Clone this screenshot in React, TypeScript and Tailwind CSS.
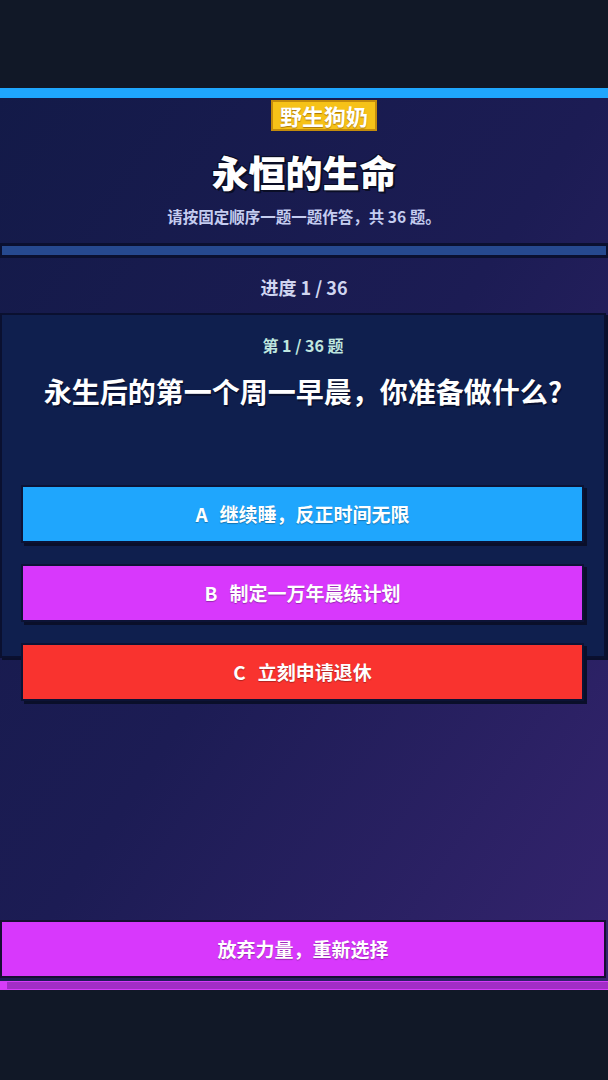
const options = [
  { key: "A", text: "继续睡，反正时间无限", color: "bg-[#1fa6fd]" },
  { key: "B", text: "制定一万年晨练计划", color: "bg-[#d838fc]" },
  { key: "C", text: "立刻申请退休", color: "bg-[#f9332f]" },
];

const font = "font-['Noto_Sans_CJK_SC','Noto_Sans',sans-serif]";

export default function App() {
  return (
    <div className={`flex min-h-[1080px] flex-col bg-[#111827] ${font}`}>
      <div className="h-[88px]" />
      <main className="flex h-[902px] flex-col bg-linear-to-br from-[#131a48] via-[#1c1c54] to-[#35246f]">
        <div className="h-[10px] bg-[#1fa6fd]" />

        <div className="ml-[40px] mt-[2px] self-center border-2 border-[#c48c0c] bg-[#f6c218] px-[7px] text-[22px] font-bold leading-[27px] text-white [text-shadow:0_1px_1px_rgba(120,70,0,0.6)]">
          野生狗奶
        </div>

        <h1 className="mt-[19px] text-center text-[37px] font-black leading-[44px] text-white [text-shadow:2px_2px_0_#0a0e26,-1px_-1px_0_#0a0e26,1px_-1px_0_#0a0e26,-1px_1px_0_#0a0e26]">
          永恒的生命
        </h1>
        <p className="mt-[12px] text-center text-[15.5px] font-bold leading-[20px] text-[#c5cdf0]">
          请按固定顺序一题一题作答，共 36 题。
        </p>

        <div className="mt-[17px] h-[15px] border-[3px] border-[#0b1030] border-l-2 border-r-2 bg-[#26498f]" />

        <p className="mt-[17px] text-center text-[18px] font-bold leading-[24px] text-[#d0d6f0]">
          进度 1 / 36
        </p>

        <section className="mr-[2px] mt-[14px] h-[345px] border-2 border-[#0a1030] bg-[#0f1f4e] shadow-[2px_2px_0_#0a0f2c]">
          <p className="pt-[19px] text-center text-[16px] font-bold leading-[22px] text-[#bfe6df]">
            第 1 / 36 题
          </p>
          <h2 className="mt-[17px] text-center text-[28px] font-bold leading-[36px] text-white [text-shadow:1px_2px_0_#081030]">
            永生后的第一个周一早晨，你准备做什么?
          </h2>
          <div className="ml-[19px] mr-[20px] mt-[76px] flex flex-col gap-[21px]">
            {options.map((o) => (
              <button
                key={o.key}
                className={`flex h-[58px] items-center justify-center gap-[12px] border-2 border-[#0c1336] ${o.color} text-[19px] font-bold text-white shadow-[3px_3px_0_#0a0f2a] [text-shadow:0_1px_1px_rgba(0,0,0,0.3)]`}
              >
                <span>{o.key}</span>
                <span>{o.text}</span>
              </button>
            ))}
          </div>
        </section>

        <button className="mr-[2px] mt-auto flex h-[58px] items-center justify-center border-2 border-[#170f33] bg-[#d838fc] text-[19px] font-bold text-white [text-shadow:0_1px_1px_rgba(0,0,0,0.3)]">
          放弃力量，重新选择
        </button>
        <div className="mt-[3px] flex h-[9px] border-y border-[#d63cf8] bg-[#a22dc6]">
          <div className="w-[7px] bg-[#d63cf8]" />
        </div>
      </main>
    </div>
  );
}
